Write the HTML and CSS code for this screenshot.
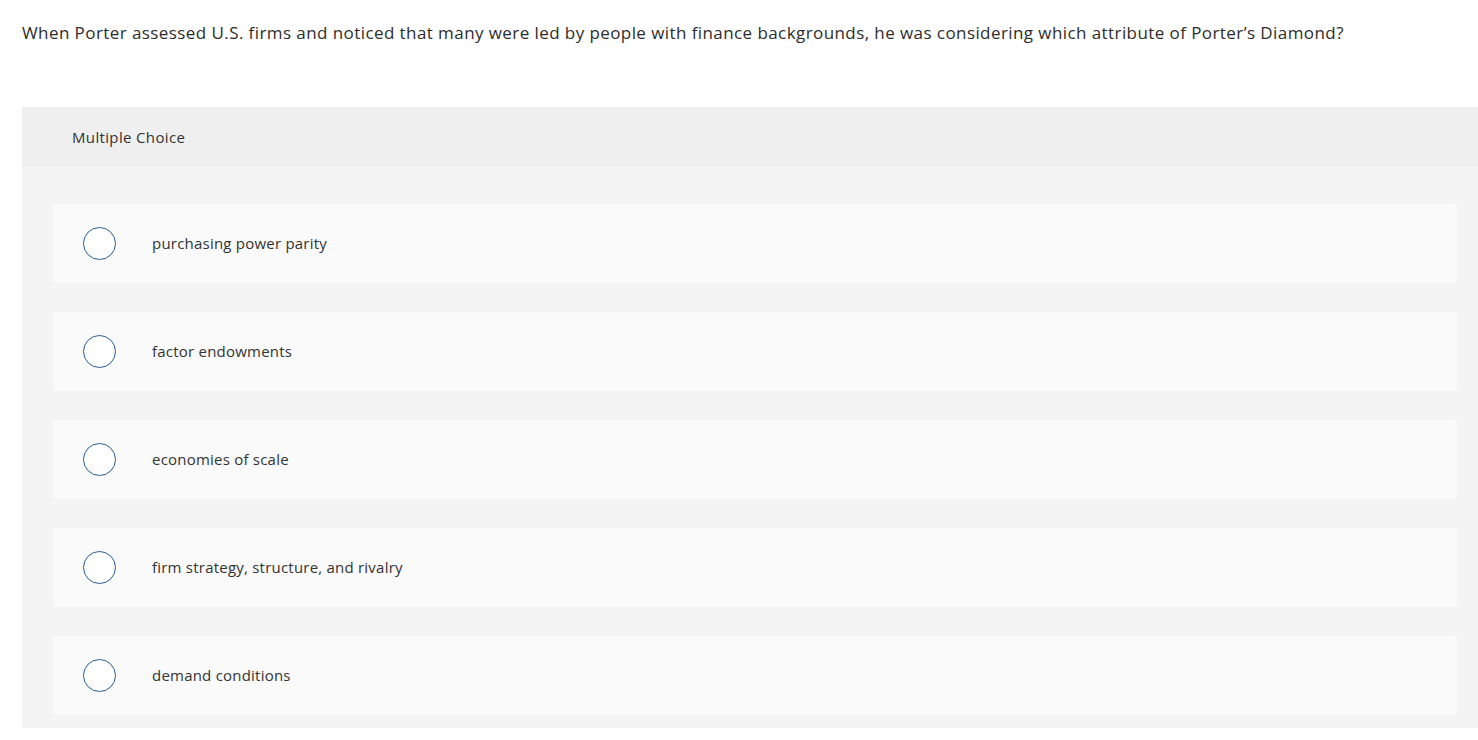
FILE: index.html
```html
<!DOCTYPE html>
<html>
<head>
<meta charset="utf-8">
<link rel="stylesheet" href="styles.css">
</head>
<body>
<div class="page">
  <p class="question">When Porter assessed U.S. firms and noticed that many were led by people with finance backgrounds, he was considering which attribute of Porter’s Diamond?</p>
  <section class="panel">
    <div class="panel-head">Multiple Choice</div>
    <div class="choices">
      <label class="choice"><span class="radio"></span><span class="choice-text">purchasing power parity</span></label>
      <label class="choice"><span class="radio"></span><span class="choice-text">factor endowments</span></label>
      <label class="choice"><span class="radio"></span><span class="choice-text">economies of scale</span></label>
      <label class="choice"><span class="radio"></span><span class="choice-text">firm strategy, structure, and rivalry</span></label>
      <label class="choice"><span class="radio"></span><span class="choice-text">demand conditions</span></label>
    </div>
  </section>
</div>
</body>
</html>
```
FILE: styles.css
```css
html, body {
  margin: 0;
  padding: 0;
  background: #ffffff;
}
body {
  font-family: "Open Sans", "Liberation Sans", sans-serif;
  font-variant-ligatures: none;
  color: #333333;
}
.page {
  padding-left: 22px;
}
.question {
  margin: 0;
  padding-top: 21px;
  font-size: 17px;
  line-height: 24px;
  letter-spacing: 0.42px;
  color: #2d2d2d;
  height: 86px;
}
.panel {
  background: #f4f4f4;
  padding-bottom: 13px;
}
.panel-head {
  background: #efefef;
  height: 59px;
  display: flex;
  align-items: center;
  padding-left: 50px;
  font-size: 15px;
  letter-spacing: 0.35px;
  color: #333;
}
.choices {
  display: flex;
  flex-direction: column;
  gap: 29px;
  padding: 38px 21px 0 31px;
}
.choice {
  display: flex;
  align-items: center;
  height: 79px;
  background: #fafafa;
  border-radius: 3px;
  padding-left: 30px;
  box-sizing: border-box;
}
.radio {
  width: 31px;
  height: 31px;
  border: 1px solid #2a5b93;
  border-radius: 50%;
  background: #fff;
  flex: none;
}
.choice-text {
  margin-left: 36px;
  margin-bottom: 2px;
  font-size: 15px;
  line-height: 20px;
  letter-spacing: 0.22px;
  color: #333;
}
```
